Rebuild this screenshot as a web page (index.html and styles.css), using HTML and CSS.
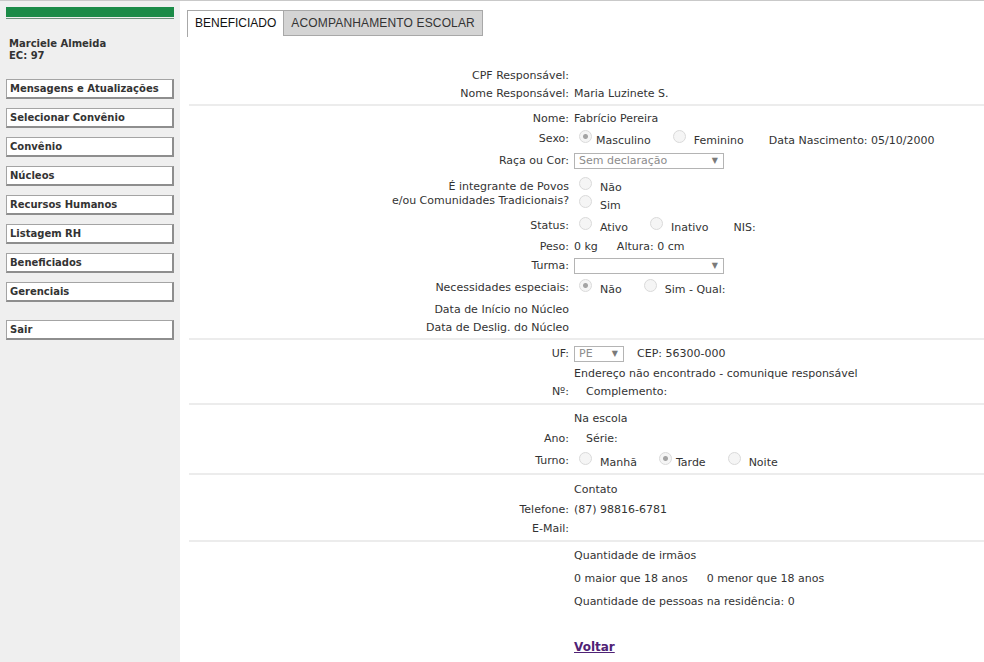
FILE: index.html
```html
<!DOCTYPE html>
<html lang="pt-BR">
<head>
<meta charset="utf-8">
<title>Beneficiado</title>
<link rel="stylesheet" href="styles.css">
</head>
<body>
<div class="page">
  <aside class="sidebar">
    <div class="brand"></div>
    <div class="brand-line"></div>
    <div class="user">Marciele Almeida<br>EC: 97</div>
    <nav class="menu">
      <a class="menu-btn" href="#">Mensagens e Atualizações</a>
      <a class="menu-btn" href="#">Selecionar Convênio</a>
      <a class="menu-btn" href="#">Convênio</a>
      <a class="menu-btn" href="#">Núcleos</a>
      <a class="menu-btn" href="#">Recursos Humanos</a>
      <a class="menu-btn" href="#">Listagem RH</a>
      <a class="menu-btn" href="#">Beneficiados</a>
      <a class="menu-btn" href="#">Gerenciais</a>
    </nav>
    <a class="menu-btn sair" href="#">Sair</a>
  </aside>

  <main class="main">
    <div class="tabs">
      <div class="tab active">BENEFICIADO</div>
      <div class="tab">ACOMPANHAMENTO ESCOLAR</div>
    </div>

    <div class="form">
      <section class="sec sec-a">
        <div class="row h18"><div class="lbl">CPF Responsável:</div><div class="val"></div></div>
        <div class="row h18"><div class="lbl">Nome Responsável:</div><div class="val">Maria Luzinete S.</div></div>
      </section>
      <div class="sep mt1"></div>

      <section class="sec pt4">
        <div class="row h18"><div class="lbl">Nome:</div><div class="val">Fabrício Pereira</div></div>
        <div class="row h22"><div class="lbl">Sexo:</div>
          <div class="val">
            <span class="opt"><span class="radio on"></span><span class="opt-text">Masculino</span></span>
            <span class="opt"><span class="radio"></span><span class="opt-text wide">Feminino</span></span>
            <span class="after-opt">Data Nascimento: 05/10/2000</span>
          </div>
        </div>
        <div class="row h22"><div class="lbl">Raça ou Cor:</div>
          <div class="val"><span class="select w150"><span>Sem declaração</span><span class="arrow">▼</span></span></div>
        </div>
        <div class="row h43"><div class="lbl lbl-2">É integrante de Povos<br>e/ou Comunidades Tradicionais?</div>
          <div class="val val-col">
            <span class="opt"><span class="radio"></span><span class="opt-text wide">Não</span></span>
            <span class="opt"><span class="radio"></span><span class="opt-text wide">Sim</span></span>
          </div>
        </div>
        <div class="row h22"><div class="lbl">Status:</div>
          <div class="val">
            <span class="opt"><span class="radio"></span><span class="opt-text wide">Ativo</span></span>
            <span class="opt"><span class="radio"></span><span class="opt-text wide">Inativo</span></span>
            <span class="after-opt">NIS:</span>
          </div>
        </div>
        <div class="row h19"><div class="lbl">Peso:</div><div class="val">0 kg<span class="spaced">Altura: 0 cm</span></div></div>
        <div class="row h19"><div class="lbl">Turma:</div>
          <div class="val"><span class="select w150"><span></span><span class="arrow">▼</span></span></div>
        </div>
        <div class="row h26"><div class="lbl">Necessidades especiais:</div>
          <div class="val">
            <span class="opt"><span class="radio on"></span><span class="opt-text wide">Não</span></span>
            <span class="opt"><span class="radio"></span><span class="opt-text wide">Sim - Qual:</span></span>
          </div>
        </div>
        <div class="row h18"><div class="lbl">Data de Início no Núcleo</div><div class="val"></div></div>
        <div class="row h18"><div class="lbl">Data de Deslig. do Núcleo</div><div class="val"></div></div>
      </section>
      <div class="sep mt1"></div>

      <section class="sec pt4">
        <div class="row h20"><div class="lbl">UF:</div>
          <div class="val"><span class="select w50"><span>PE</span><span class="arrow">▼</span></span><span class="cep">CEP: 56300-000</span></div>
        </div>
        <div class="row h19"><div class="lbl"></div><div class="val">Endereço não encontrado - comunique responsável</div></div>
        <div class="row h18"><div class="lbl">Nº:</div><div class="val"><span class="indent">Complemento:</span></div></div>
      </section>
      <div class="sep mt2"></div>

      <section class="sec pt5">
        <div class="row h18"><div class="lbl"></div><div class="val">Na escola</div></div>
        <div class="row h22"><div class="lbl">Ano:</div><div class="val"><span class="indent">Série:</span></div></div>
        <div class="row h22"><div class="lbl">Turno:</div>
          <div class="val">
            <span class="opt"><span class="radio"></span><span class="opt-text wide">Manhã</span></span>
            <span class="opt"><span class="radio on"></span><span class="opt-text">Tarde</span></span>
            <span class="opt"><span class="radio"></span><span class="opt-text wide">Noite</span></span>
          </div>
        </div>
      </section>
      <div class="sep mt1"></div>

      <section class="sec pt6">
        <div class="row h18"><div class="lbl"></div><div class="val">Contato</div></div>
        <div class="row h22"><div class="lbl">Telefone:</div><div class="val">(87) 98816-6781</div></div>
        <div class="row h16"><div class="lbl">E-Mail:</div><div class="val"></div></div>
      </section>
      <div class="sep mt3"></div>

      <section class="sec pt3">
        <div class="row h22"><div class="lbl"></div><div class="val">Quantidade de irmãos</div></div>
        <div class="row h23"><div class="lbl"></div><div class="val">0 maior que 18 anos<span class="spaced">0 menor que 18 anos</span></div></div>
        <div class="row h23"><div class="lbl"></div><div class="val">Quantidade de pessoas na residência: 0</div></div>
        <div class="row h16 voltar-row"><div class="lbl"></div><div class="val"><a class="voltar" href="#">Voltar</a></div></div>
      </section>
    </div>
  </main>
</div>
</body>
</html>
```

FILE: styles.css
```css
html, body {
  margin: 0;
  padding: 0;
}

body {
  font-family: "DejaVu Sans", Verdana, sans-serif;
  font-size: 11px;
  line-height: 14px;
  color: #333;
  background: #fff;
}

.page {
  display: flex;
  height: 662px;
  box-sizing: border-box;
  border-top: 1px solid #c9c9c9;
  overflow: hidden;
}

/* Sidebar */
.sidebar {
  width: 180px;
  flex: none;
  box-sizing: border-box;
  background: #efefef;
  padding: 6px 6px 0 6px;
}

.brand {
  height: 10px;
  background: #1b8b47;
}

.brand-line {
  height: 1px;
  margin-top: 1px;
  background: #6f927c;
}

.user {
  margin-top: 19px;
  padding-left: 3px;
  font-weight: bold;
  font-size: 10px;
  line-height: 12px;
  color: #333;
}

.menu {
  margin-top: 17px;
  display: flex;
  flex-direction: column;
  gap: 9px;
}

.menu-btn {
  display: block;
  height: 20px;
  box-sizing: border-box;
  background: #fff;
  border: 1px solid #a4a4a4;
  border-right: 2px solid #8e8e8e;
  border-bottom: 2px solid #8e8e8e;
  padding-left: 3px;
  font-weight: bold;
  font-size: 10px;
  line-height: 18px;
  color: #333;
  text-decoration: none;
  white-space: nowrap;
}

.menu-btn.sair {
  margin-top: 18px;
}

/* Main */
.main {
  flex: 1;
  min-width: 0;
  padding: 9px 0 0 7px;
}

.tabs {
  display: flex;
  align-items: flex-start;
}

.tab {
  font-family: "Liberation Sans", Arial, sans-serif;
  font-size: 12px;
  box-sizing: border-box;
  display: flex;
  align-items: center;
  height: 26px;
  padding: 0 7px;
  border: 1px solid #a8a8a8;
  background: #d4d4d4;
  color: #333;
  white-space: nowrap;
  letter-spacing: 0.15px;
}

.tab.active {
  height: 27px;
  padding-bottom: 2px;
  border-bottom: none;
  border-right: none;
  background: #fff;
  color: #111;
  letter-spacing: 0;
}

.form {
  margin-left: 2px;
  margin-top: 30px;
}

.sep {
  height: 2px;
  background: #ececec;
}

.mt1 { margin-top: 1px; }
.mt2 { margin-top: 2px; }
.mt3 { margin-top: 3px; }
.pt3 { padding-top: 3px; }
.pt4 { padding-top: 4px; }
.pt5 { padding-top: 5px; }
.pt6 { padding-top: 6px; }

.row {
  display: grid;
  grid-template-columns: 380px 1fr;
  column-gap: 5px;
  align-items: center;
}

.h16 { height: 16px; }
.h18 { height: 18px; }
.h19 { height: 19px; }
.h20 { height: 20px; }
.h22 { height: 22px; }
.h23 { height: 23px; }
.h26 { height: 26px; }
.h43 { height: 43px; }

.lbl {
  text-align: right;
  white-space: nowrap;
}

.lbl-2 {
  line-height: 14px;
}

.val {
  display: flex;
  align-items: center;
  white-space: nowrap;
}

.val-col {
  flex-direction: column;
  align-items: flex-start;
  padding-top: 2px;
}

.opt {
  display: inline-flex;
  align-items: flex-start;
  height: 18px;
  margin-right: 17px;
}

.radio {
  width: 13px;
  height: 13px;
  box-sizing: border-box;
  margin-left: 5px;
  border: 1px solid #dadada;
  border-radius: 50%;
  background: #f5f5f5;
  flex: none;
}

.radio.on {
  background: radial-gradient(circle, #a4a4a4 0, #a4a4a4 2px, #f5f5f5 3px);
}

.opt-text {
  padding-top: 4px;
  margin-left: 4px;
}

.opt-text.wide {
  margin-left: 8px;
}

.after-opt {
  margin-left: 8px;
  padding-top: 4px;
}

.spaced {
  margin-left: 19px;
}

.indent {
  margin-left: 12px;
}

.cep {
  margin-left: 13px;
}

.select {
  display: inline-flex;
  align-items: center;
  justify-content: space-between;
  height: 16px;
  box-sizing: border-box;
  border: 1px solid #b4b4b4;
  padding: 0 5px 0 4px;
  color: #8c8c8c;
  background: #fff;
  line-height: 14px;
}

.w150 { width: 150px; }
.w50 { width: 50px; }

.arrow {
  font-size: 8px;
  color: #7a7a7a;
}

.voltar-row {
  margin-top: 26px;
}

.voltar {
  font-weight: bold;
  font-size: 12px;
  color: #4f2275;
  text-decoration: underline;
}
```
